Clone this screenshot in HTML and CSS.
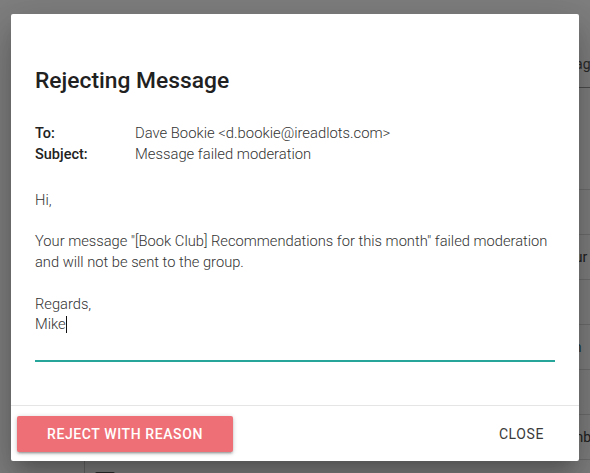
FILE: index.html
```html
<!DOCTYPE html>
<html lang="en">
<head>
<meta charset="utf-8">
<title>Rejecting Message</title>
<link rel="stylesheet" href="styles.css">
</head>
<body>
<div class="page">
  <div class="table">
    <div class="thead"><span class="cell">Message</span></div>
    <div class="row tall"></div>
    <div class="row"></div>
    <div class="row"><span class="cell">Honour</span></div>
    <div class="row"></div>
    <div class="row"><span class="cell link">Admin</span></div>
    <div class="row"></div>
    <div class="row"><span class="cell">Wilsonbury</span></div>
    <div class="row last"><span class="check"></span></div>
  </div>
</div>
<div class="overlay"></div>
<div class="modal">
  <div class="modal-content">
    <h4 class="title">Rejecting Message</h4>
    <div class="meta">
      <div class="meta-label">To:</div>
      <div class="meta-value">Dave Bookie &lt;d.bookie@ireadlots.com&gt;</div>
      <div class="meta-label">Subject:</div>
      <div class="meta-value">Message failed moderation</div>
    </div>
    <div class="editor">
      <div class="line">Hi,</div>
      <div class="line">&nbsp;</div>
      <div class="line">Your message "[Book Club] Recommendations for this month" failed moderation</div>
      <div class="line">and will not be sent to the group.</div>
      <div class="line">&nbsp;</div>
      <div class="line">Regards,</div>
      <div class="line">Mike<span class="caret"></span></div>
    </div>
  </div>
  <div class="modal-footer">
    <button class="btn btn-reject">REJECT WITH REASON</button>
    <button class="btn btn-flat">CLOSE</button>
  </div>
</div>
</body>
</html>
```
FILE: styles.css
```css
html, body {
  margin: 0;
  padding: 0;
}
body {
  width: 590px;
  height: 473px;
  overflow: hidden;
  background: #ffffff;
  font-family: Roboto, "Liberation Sans", sans-serif;
  position: relative;
}

/* background page */
.page {
  padding-top: 41px;
  padding-left: 84px;
  height: 432px;
  overflow: hidden;
}
.table {
  border-left: 1px solid #cfcfcf;
}
.thead {
  height: 46px;
  border-bottom: 1px solid #9a9a9a;
  display: flex;
  align-items: center;
  font-size: 14px;
  color: #555;
}
.row {
  height: 44px;
  border-bottom: 1px solid #dcdcdc;
  display: flex;
  align-items: center;
  font-size: 14px;
  color: #444;
}
.row.tall {
  height: 101px;
}
.cell {
  padding-left: 456px;
  white-space: nowrap;
}
.cell.link {
  color: #2b6f78;
}
.row.last {
  height: 14px;
  border-bottom: none;
  align-items: flex-start;
}
.row.last .check {
  margin: 12px 0 0 10px;
  width: 16px;
  height: 16px;
  border: 2px solid #5a5a5a;
  border-radius: 2px;
}

.overlay {
  position: absolute;
  inset: 0;
  background: rgba(0, 0, 0, 0.5);
}

/* modal */
.modal {
  position: absolute;
  left: 11px;
  top: 14px;
  width: 568px;
  background: #fff;
  border-radius: 2px;
  box-shadow: 0 24px 38px 3px rgba(0,0,0,0.14), 0 9px 46px 8px rgba(0,0,0,0.12), 0 11px 15px -7px rgba(0,0,0,0.2);
  display: flex;
  flex-direction: column;
}
.modal-content {
  padding: 24px 24px 44px;
}
.title {
  margin: 28.5px 0 0;
  font-size: 22.8px;
  line-height: 27px;
  font-weight: 500;
  color: #212121;
}
.meta {
  margin-top: 29.5px;
  display: grid;
  grid-template-columns: 100px 1fr;
  font-size: 14.5px;
  line-height: 21px;
  color: #333;
}
.meta-label {
  font-weight: 500;
  color: #222;
}
.meta-value {
  font-weight: 300;
  font-size: 14.8px;
}
.editor {
  margin-top: 25px;
  font-size: 14.7px;
  line-height: 20.7px;
  font-weight: 300;
  color: #333;
  padding-bottom: 25px;
  border-bottom: 1px solid #26a69a;
  box-shadow: 0 1px 0 0 #26a69a;
}
.line {
  white-space: nowrap;
}
.caret {
  display: inline-block;
  width: 1px;
  height: 17px;
  background: #111;
  vertical-align: -4px;
}
.modal-footer {
  height: 56px;
  box-sizing: border-box;
  border-top: 1px solid rgba(0,0,0,0.1);
  padding: 4px 6px;
  display: flex;
  align-items: flex-start;
  justify-content: space-between;
}
.btn {
  margin: 6px 0;
  height: 36px;
  line-height: 36px;
  padding: 0 30px;
  border: none;
  border-radius: 2px;
  font-family: Roboto, "Liberation Sans", sans-serif;
  font-size: 14px;
  letter-spacing: 0.6px;
  cursor: pointer;
}
.btn-reject {
  background: #ef6f76;
  color: #fff;
  font-weight: 500;
  box-shadow: 0 2px 2px 0 rgba(0,0,0,0.14), 0 3px 1px -2px rgba(0,0,0,0.12), 0 1px 5px 0 rgba(0,0,0,0.2);
}
.btn-flat {
  background: transparent;
  color: #3a3a3a;
  font-weight: 400;
  padding: 0 29px;
}
```
